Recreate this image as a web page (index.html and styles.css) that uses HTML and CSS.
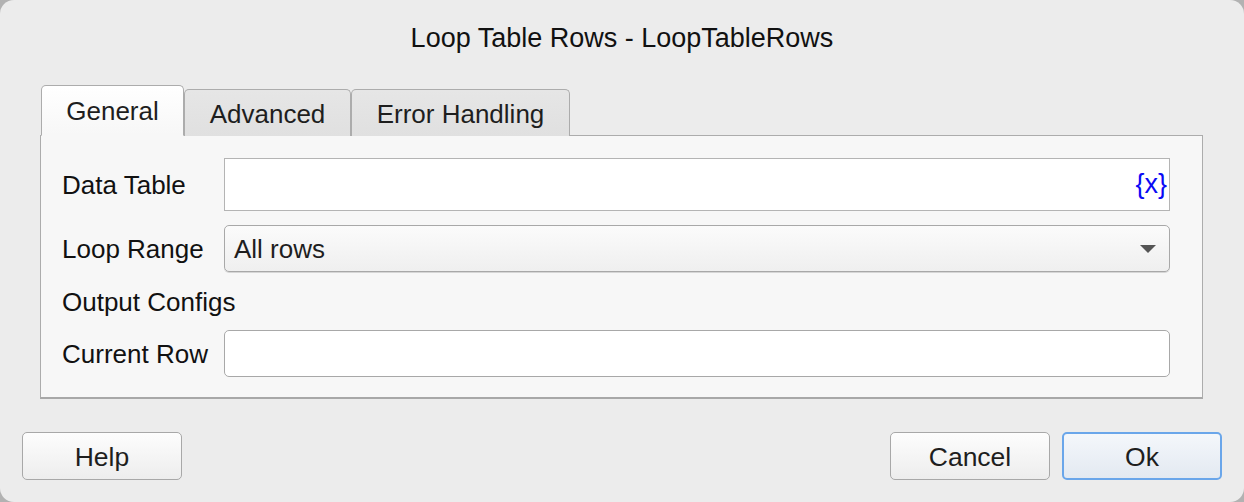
FILE: index.html
```html
<!DOCTYPE html>
<html>
<head>
<meta charset="utf-8">
<link rel="stylesheet" href="styles.css">
</head>
<body>
<div class="window">
  <div class="title">Loop Table Rows - LoopTableRows</div>
  <div class="tabs">
    <div class="tab active">General</div>
    <div class="tab adv">Advanced</div>
    <div class="tab err">Error Handling</div>
  </div>
  <div class="panel">
    <div class="label">Data Table</div>
    <div class="field text-field"><span class="var">{x}</span></div>
    <div class="label">Loop Range</div>
    <div class="field select">
      <span>All rows</span>
      <svg class="arrow" width="16" height="9" viewBox="0 0 16 9"><path d="M0 0H16L8 8Z" fill="#555"/></svg>
    </div>
    <div class="label section">Output Configs</div>
    <div class="label">Current Row</div>
    <div class="field rounded"></div>
  </div>
  <div class="footer">
    <button class="btn">Help</button>
    <div class="spacer"></div>
    <button class="btn">Cancel</button>
    <button class="btn primary">Ok</button>
  </div>
</div>
</body>
</html>
```
FILE: styles.css
```css
html, body {
  margin: 0;
  padding: 0;
  background: #b2b2b2;
}
body {
  font-family: "Liberation Sans", Arial, sans-serif;
  color: #1e1e1e;
}
.window {
  width: 1244px;
  height: 502px;
  box-sizing: border-box;
  background: #ececec;
  border-radius: 14px;
  display: flex;
  flex-direction: column;
  overflow: hidden;
}
.title {
  height: 85px;
  box-sizing: border-box;
  padding-top: 23px;
  text-align: center;
  font-size: 27px;
  line-height: 30px;
  color: #111;
}
.tabs {
  display: flex;
  align-items: flex-end;
  padding-left: 41px;
  height: 51px;
  box-sizing: border-box;
  position: relative;
  z-index: 1;
  margin-bottom: -1px;
}
.tab {
  box-sizing: border-box;
  height: 47px;
  border: 1px solid #acacac;
  border-bottom: none;
  border-radius: 5px 5px 0 0;
  background: linear-gradient(#e6e6e6, #e0e0e0);
  font-size: 26px;
  display: flex;
  align-items: center;
  justify-content: center;
  padding-top: 3px;
}
.tab.active {
  height: 51px;
  width: 143px;
  background: linear-gradient(#ffffff, #f7f7f7);
  padding-top: 6px;
  padding-bottom: 4px;
  border-bottom: 1px solid #f7f7f7;
}
.tab.adv { width: 167px; }
.tab.err { width: 219px; }
.panel {
  margin-left: 40px;
  width: 1163px;
  height: 264px;
  box-sizing: border-box;
  background: #f7f7f7;
  border: 1px solid #acacac;
  border-bottom: 2px solid #a8a8a8;
  padding: 22px 32px 21px 21px;
  display: grid;
  grid-template-columns: 162px 1fr;
  grid-template-rows: 53px 47px 30px 47px;
  row-gap: 14px;
  align-items: center;
}
.label {
  font-size: 26px;
  color: #111;
  white-space: nowrap;
  padding-top: 2px;
}
.label.section {
  grid-column: 1 / 3;
}
.field {
  box-sizing: border-box;
  height: 100%;
  background: #fff;
  border: 1px solid #b4b4b4;
  display: flex;
  align-items: center;
  font-size: 26px;
}
.text-field {
  justify-content: flex-end;
  padding-right: 2px;
}
.var {
  color: #0a0af5;
  font-size: 27px;
}
.select {
  border-radius: 5px;
  border-color: #a8a8a8;
  background: linear-gradient(#fbfbfb, #efefef);
  padding: 1px 13px 0 9px;
  justify-content: space-between;
  box-shadow: 0 1px 0 #d6d6d6;
}
.rounded {
  border-radius: 5px;
  border-color: #a8a8a8;
}
.footer {
  display: flex;
  padding: 0 22px;
  margin-top: 33px;
  gap: 12px;
}
.spacer { flex: 1; }
.btn {
  width: 160px;
  height: 48px;
  box-sizing: border-box;
  border: 1px solid #a8a8a8;
  border-radius: 5px;
  background: linear-gradient(#fdfdfd, #ededed);
  font-family: "Liberation Sans", Arial, sans-serif;
  font-size: 26.5px;
  color: #1e1e1e;
  padding: 2px 0 0;
}
.btn.primary {
  border: 2px solid #6aa6ea;
  background: linear-gradient(#f4f7fb, #e3e9f1);
}
```
